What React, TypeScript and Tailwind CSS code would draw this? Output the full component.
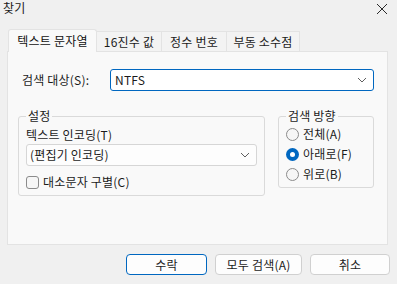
import React from "react";

const font = {
  fontFamily: '"Noto Sans CJK KR", "Noto Sans", sans-serif',
};

const Chevron = () => (
  <svg width="10" height="6" viewBox="0 0 10 6" fill="none">
    <path d="M1 1l4 4 4-4" stroke="#5f5f5f" strokeWidth="1" />
  </svg>
);

const Radio = ({ checked, label }: { checked?: boolean; label: string }) => (
  <div className="flex items-center gap-[4px] h-[20px]">
    {checked ? (
      <div className="w-[13px] h-[13px] rounded-full bg-[#0067c0] flex items-center justify-center">
        <div className="w-[5px] h-[5px] rounded-full bg-white" />
      </div>
    ) : (
      <div className="w-[13px] h-[13px] rounded-full border border-[#8b8b8b] bg-[#f6f6f6]" />
    )}
    <span>{label}</span>
  </div>
);

export default function App() {
  return (
    <div
      className="w-[397px] h-[284px] bg-[#f0f0f0] text-[12px] leading-[16px] text-[#1b1b1b] flex flex-col overflow-hidden tracking-[0.2px]"
      style={font}
    >
      {/* title bar */}
      <div className="h-[29px] flex items-start justify-between pl-[3px] pr-[9px]">
        <span className="text-[12px] leading-[16px]">찾기</span>
        <svg width="12" height="12" viewBox="0 0 12 12" className="mt-[3px]">
          <path d="M1 1l10 10M11 1L1 11" stroke="#2a2a2a" strokeWidth="1" />
        </svg>
      </div>

      {/* tabs */}
      <div className="flex items-end pl-[8px] h-[23px] relative z-10">
        <div className="w-[89px] h-[23px] bg-[#f9f9f9] border border-b-0 border-[#e3e3e3] rounded-t-[3px] flex items-center justify-center text-[#111]">
          텍스트 문자열
        </div>
        <div className="w-[65px] h-[20px] mb-[1px] bg-[#f3f3f3] border border-b-0 border-l-0 border-[#e3e3e3] flex items-center justify-center">
          16진수 값
        </div>
        <div className="w-[65px] h-[20px] mb-[1px] bg-[#f3f3f3] border border-b-0 border-l-0 border-[#e3e3e3] flex items-center justify-center">
          정수 번호
        </div>
        <div className="w-[73px] h-[20px] mb-[1px] bg-[#f3f3f3] border border-b-0 border-l-0 border-[#e3e3e3] flex items-center justify-center">
          부동 소수점
        </div>
      </div>

      {/* panel */}
      <div className="ml-[7px] w-[381px] h-[194px] -mt-[1px] bg-[#f9f9f9] border border-[#e3e3e3] flex flex-col">
        <div className="flex items-center mt-[17px] pl-[14px]">
          <span className="w-[88px]">검색 대상(S):</span>
          <div className="w-[264px] h-[22px] border border-[#0067c0] rounded-[3px] bg-white flex items-center justify-between pl-[4px] pr-[6px]">
            <span>NTFS</span>
            <Chevron />
          </div>
        </div>

        <div className="flex mt-[19px] pl-[10px]">
          {/* settings group */}
          <div className="relative w-[247px] h-[80px] border border-[#dadada] rounded-[3px] mt-[6px] px-[7px] pt-[10px]">
            <span className="absolute -top-[9px] left-[7px] px-[2px] bg-[#f9f9f9]">설정</span>
            <div>텍스트 인코딩(T)</div>
            <div className="mt-[1px] w-[231px] h-[22px] border border-[#d6d6d6] rounded-[3px] bg-[#fdfdfd] flex items-center justify-between pl-[3px] pr-[6px]">
              <span>(편집기 인코딩)</span>
              <Chevron />
            </div>
            <div className="flex items-center gap-[4px] mt-[8px]">
              <div className="w-[13px] h-[13px] rounded-[3px] border border-[#8b8b8b] bg-[#f6f6f6]" />
              <span>대소문자 구별(C)</span>
            </div>
          </div>

          {/* direction group */}
          <div className="relative ml-[13px] w-[96px] h-[72px] border border-[#dadada] rounded-[3px] mt-[6px] pl-[7px] pt-[7px]">
            <span className="absolute -top-[9px] left-[7px] px-[2px] bg-[#f9f9f9]">검색 방향</span>
            <Radio label="전체(A)" />
            <Radio checked label="아래로(F)" />
            <Radio label="위로(B)" />
          </div>
        </div>
      </div>

      {/* buttons */}
      <div className="flex justify-end gap-[8px] pr-[7px] mt-[9px]">
        <button className="w-[81px] h-[21px] rounded-[4px] border border-[#0067c0] bg-[#fdfdfd] flex items-center justify-center">
          수락
        </button>
        <button className="w-[87px] h-[21px] rounded-[4px] border border-[#d0d0d0] bg-[#fdfdfd] flex items-center justify-center">
          모두 검색(A)
        </button>
        <button className="w-[80px] h-[21px] rounded-[4px] border border-[#d0d0d0] bg-[#fdfdfd] flex items-center justify-center">
          취소
        </button>
      </div>
    </div>
  );
}
